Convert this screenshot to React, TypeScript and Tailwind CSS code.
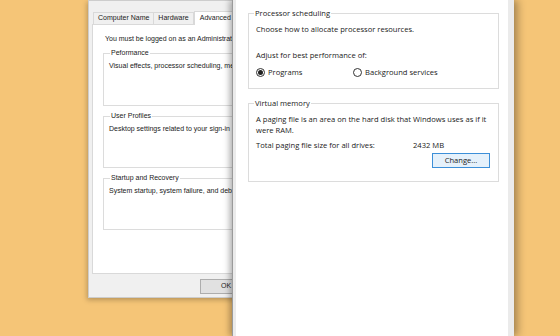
import React from 'react';

const seg = { fontFamily: '"Open Sans", "Noto Sans", sans-serif' };
const tah = { fontFamily: '"Liberation Sans", Arial, sans-serif' };

function Radio({ checked, label }: { checked?: boolean; label: string }) {
  return (
    <label className="flex items-center gap-[3px]">
      <span className="w-[9px] h-[9px] shrink-0 rounded-full border border-[#333] bg-white flex items-center justify-center">
        {checked && <span className="w-[5px] h-[5px] rounded-full bg-[#222]" />}
      </span>
      <span className="whitespace-nowrap">{label}</span>
    </label>
  );
}

function BackGroup({ title, text, h }: { title: string; text: string; h: string }) {
  return (
    <fieldset className={`border border-[#dcdcdc] pl-[5px] pt-0 ${h}`}>
      <legend className="px-[1px] ml-[1px] leading-[10px] text-[#222]">{title}</legend>
      <p className="mt-[3px] whitespace-nowrap">{text}</p>
    </fieldset>
  );
}

export default function App() {
  return (
    <div className="relative w-[560px] h-[336px] overflow-hidden bg-[#f5c577]">
      {/* System Properties (behind) */}
      <div
        style={tah}
        className="absolute left-[88px] top-0 w-[180px] h-[298px] bg-[#f0f0f0] border border-[#cdcdcd] text-[7px] text-[#1a1a1a] shadow-[-1px_2px_5px_rgba(0,0,0,0.25)]"
      >
        <div className="flex items-end h-[23px] pl-[4px]">
          <div className="h-[12px] px-[4px] flex items-center border border-b-0 border-[#d9d9d9] bg-[#f0f0f0]">Computer Name</div>
          <div className="h-[12px] px-[4px] flex items-center border border-b-0 border-l-0 border-[#d9d9d9] bg-[#f0f0f0]">Hardware</div>
          <div className="h-[14px] px-[5px] flex items-center border border-b-0 border-[#d9d9d9] bg-white -mb-px relative">Advanced</div>
        </div>
        <div className="ml-[3px] h-[250px] bg-white border border-[#d9d9d9] pl-[10px] pt-[9px] overflow-hidden">
          <p className="ml-[2px] whitespace-nowrap leading-[10px]">You must be logged on as an Administrator to make most of these changes.</p>
          <div className="flex flex-col gap-[5px] mt-[4px]">
            <BackGroup title="Peformance" text="Visual effects, processor scheduling, memory usage, and virtual memory" h="h-[58px]" />
            <BackGroup title="User Profiles" text="Desktop settings related to your sign-in" h="h-[57px]" />
            <BackGroup title="Startup and Recovery" text="System startup, system failure, and debugging information" h="h-[57px]" />
          </div>
        </div>
        <div className="flex pl-[111px] pt-[5px]">
          <button className="w-[52px] h-[15px] bg-[#e1e1e1] border border-[#adadad] text-[7px] text-[#222]">OK</button>
        </div>
      </div>

      {/* Performance Options (front) */}
      <div
        style={seg}
        className="absolute left-[232px] top-0 w-[282px] h-[336px] flex bg-[#ebebeb] border-l border-[#9a9a9a] shadow-[-3px_0_6px_rgba(0,0,0,0.25),4px_0_8px_rgba(0,0,0,0.3)] text-[7.6px] text-[#1a1a1a]"
      >
        <div className="ml-[3px] mr-[6px] flex-1 bg-white pl-[12px] pr-[9px] pt-[8px]">
          <fieldset className="border border-[#dcdcdc] h-[81px] pl-[7px] pt-0">
            <legend className="leading-[11px] px-[1px] -ml-[2px]">Processor scheduling</legend>
            <p className="mt-[5px] leading-[11px]">Choose how to allocate processor resources.</p>
            <p className="mt-[15px] leading-[11px]">Adjust for best performance of:</p>
            <div className="flex mt-[6px] leading-[11px]">
              <div className="w-[97px]"><Radio checked label="Programs" /></div>
              <Radio label="Background services" />
            </div>
          </fieldset>
          <fieldset className="mt-[9px] border border-[#dcdcdc] h-[84px] pl-[7px] pr-[6px] pt-0">
            <legend className="leading-[11px] px-[1px] -ml-[2px]">Virtual memory</legend>
            <p className="mt-[5px] leading-[11px]">A paging file is an area on the hard disk that Windows uses as if it were RAM.</p>
            <div className="flex mt-[4px] leading-[11px]">
              <span className="w-[157px]">Total paging file size for all drives:</span>
              <span>2432 MB</span>
            </div>
            <div className="flex justify-end mt-[2px] pr-[2px]">
              <button className="w-[58px] h-[15px] bg-[#e5f1fb] border border-[#3c8fd8] text-[7.6px] leading-[11px]">Change...</button>
            </div>
          </fieldset>
        </div>
      </div>
    </div>
  );
}
